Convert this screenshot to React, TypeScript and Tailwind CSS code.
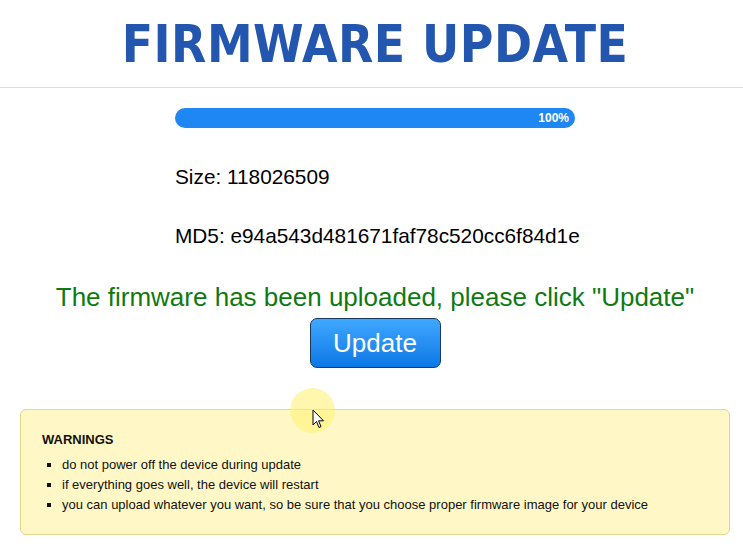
import React from "react";

export default function App() {
  const arial = { fontFamily: '"Liberation Sans", Arial, sans-serif' };
  return (
    <div className="relative w-[750px] h-[548px] overflow-hidden bg-white" style={arial}>
      <header className="h-[88px] border-b border-[#dcdcdc] flex items-center justify-center">
        <h1
          className="text-[51px] font-bold text-[#2356ae] leading-none tracking-[0.5px] mt-[1px]"
          style={{ fontFamily: '"DejaVu Sans Condensed", "DejaVu Sans", sans-serif' }}
        >
          FIRMWARE UPDATE
        </h1>
      </header>

      <div className="flex flex-col items-center">
        <div className="w-[400px] mt-[20px]">
          <div className="h-[20px] rounded-full bg-[#1f87f3] flex items-center justify-end pr-[6px]">
            <span className="text-[12px] font-semibold text-white leading-none">100%</span>
          </div>
          <p className="text-[20.8px] text-black leading-none mt-[39px] whitespace-nowrap">Size: 118026509</p>
          <p className="text-[20.8px] text-black leading-none mt-[38px] whitespace-nowrap">MD5: e94a543d481671faf78c520cc6f84d1e</p>
        </div>
        <p className="text-[26px] text-[#0f7a10] leading-none mt-[37px] whitespace-nowrap">
          The firmware has been uploaded, please click "Update"
        </p>
        <button className="mt-[8px] w-[131px] h-[50px] rounded-[7px] border border-[#173a5e] bg-gradient-to-b from-[#3ea8ff] to-[#0878e6] text-white text-[26px] leading-none">
          Update
        </button>
      </div>

      <div className="mx-[20px] mt-[41px] h-[126px] rounded-[6px] border border-[#e2d58c] bg-[#fff8c6] pl-[21px] pt-[22px]">
        <p className="text-[13px] font-bold text-[#111] leading-[16px]">WARNINGS</p>
        <ul className="mt-[7px] text-[13px] text-[#111] leading-[20px] list-[square] pl-[20px]">
          <li>do not power off the device during update</li>
          <li>if everything goes well, the device will restart</li>
          <li>you can upload whatever you want, so be sure that you choose proper firmware image for your device</li>
        </ul>
      </div>

      <div className="absolute left-[290px] top-[388px] w-[45px] h-[45px] rounded-full bg-[#fff176]/60 pointer-events-none" />
      <svg className="absolute left-[312px] top-[409px]" width="13" height="20" viewBox="0 0 13 20">
        <path d="M1 1 L1 16 L4.5 12.5 L7 18.5 L9 17.6 L6.6 11.8 L11.5 11.8 Z" fill="white" stroke="black" strokeWidth="1" strokeLinejoin="round" />
      </svg>
    </div>
  );
}
